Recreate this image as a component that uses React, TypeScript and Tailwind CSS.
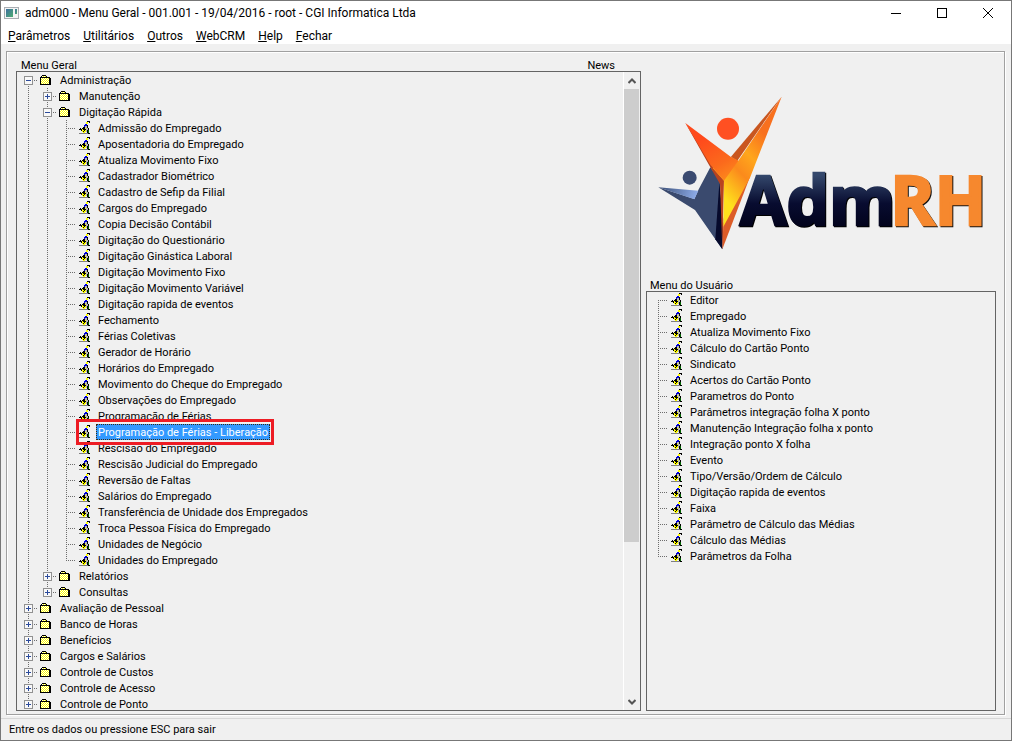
import clsx from "clsx";

const menus = ["Parâmetros", "Utilitários", "Outros", "WebCRM", "Help", "Fechar"];

type Row = {
  label: string;
  level: number;
  open?: boolean;
  last?: boolean;
};

const shortcuts = [
  "Admissão do Empregado",
  "Aposentadoria do Empregado",
  "Atualiza Movimento Fixo",
  "Cadastrador Biométrico",
  "Cadastro de Sefip da Filial",
  "Cargos do Empregado",
  "Copia Decisão Contábil",
  "Digitação do Questionário",
  "Digitação Ginástica Laboral",
  "Digitação Movimento Fixo",
  "Digitação Movimento Variável",
  "Digitação rapida de eventos",
  "Fechamento",
  "Férias Coletivas",
  "Gerador de Horário",
  "Horários do Empregado",
  "Movimento do Cheque do Empregado",
  "Observações do Empregado",
  "Programação de Férias",
  "Programação de Férias - Liberação",
  "Rescisão do Empregado",
  "Rescisão Judicial do Empregado",
  "Reversão de Faltas",
  "Salários do Empregado",
  "Transferência de Unidade dos Empregados",
  "Troca Pessoa Física do Empregado",
  "Unidades de Negócio",
  "Unidades do Empregado",
];

const selected = "Programação de Férias - Liberação";

const mainRows: Row[] = [
  { label: "Administração", level: 0, open: true },
  { label: "Manutenção", level: 1 },
  { label: "Digitação Rápida", level: 1, open: true },
  ...shortcuts.map((label, i) => ({
    label,
    level: 2,
    last: i === shortcuts.length - 1,
  })),
  { label: "Relatórios", level: 1 },
  { label: "Consultas", level: 1, last: true },
  { label: "Avaliação de Pessoal", level: 0 },
  { label: "Banco de Horas", level: 0 },
  { label: "Benefícios", level: 0 },
  { label: "Cargos e Salários", level: 0 },
  { label: "Controle de Custos", level: 0 },
  { label: "Controle de Acesso", level: 0 },
  { label: "Controle de Ponto", level: 0 },
];

const userRows = [
  "Editor",
  "Empregado",
  "Atualiza Movimento Fixo",
  "Cálculo do Cartão Ponto",
  "Sindicato",
  "Acertos do Cartão Ponto",
  "Parametros do Ponto",
  "Parâmetros integração folha X ponto",
  "Manutenção Integração folha x ponto",
  "Integração ponto X folha",
  "Evento",
  "Tipo/Versão/Ordem de Cálculo",
  "Digitação rapida de eventos",
  "Faixa",
  "Parâmetro de Cálculo das Médias",
  "Cálculo das Médias",
  "Parâmetros da Folha",
];

const palette: Record<string, string> = {
  K: "#000000",
  Y: "#ffff00",
  W: "#ffffff",
  B: "#0000d8",
  G: "#b8b8b8",
  D: "#808080",
  N: "#006000",
};

const folderBitmap = [
  "..KKKK.....",
  ".KWYWYK....",
  "KKKKKKKKKK.",
  "KWYWYWYWYKK",
  "KYWYWYWYWKK",
  "KWYWYWYWYKK",
  "KYWYWYWYWKK",
  "KWYWYWYWYKK",
  "KYWYWYWYWKK",
  "KKKKKKKKKKK",
];

const programBitmap = [
  "........KKK",
  ".......YY.K",
  ".......YY..",
  "......BB...",
  ".....BBBK..",
  ".....BGGK..",
  "....KKGGK..",
  ".K.KKKYGGK.",
  "KKKYKKKGGK.",
  "..KYYKYGKN.",
  "...YKYYGKN.",
  "....YY..KN.",
  "DDDDDDDDDKK",
];

// draws a small icon from rows of palette letters
const Bitmap = ({ rows }: { rows: string[] }) => (
  <svg
    width={rows[0].length}
    height={rows.length}
    shapeRendering="crispEdges"
    aria-hidden="true"
    className="shrink-0"
  >
    {rows.map((row, y) =>
      row
        .split("")
        .map((c, x) =>
          c === "." ? null : (
            <rect key={`${x}-${y}`} x={x} y={y} width={1} height={1} fill={palette[c]} />
          )
        )
    )}
  </svg>
);

type CellProps = {
  up?: boolean;
  down?: boolean;
  across?: boolean;
  box?: "plus" | "minus";
};

const Cell = ({ up, down, across, box }: CellProps) => (
  <svg
    width={19}
    height={16}
    shapeRendering="crispEdges"
    aria-hidden="true"
    className="shrink-0"
  >
    <g stroke="#6d6d6d" strokeDasharray="1 1">
      {up && <path d="M9.5 0V8" />}
      {down && <path d="M9.5 8V16" />}
      {across && <path d="M9 8.5H19" />}
    </g>
    {box && (
      <>
        <rect x={5.5} y={4.5} width={8} height={8} fill="#f8f8f8" stroke="#919191" />
        <path d="M7 8.5H12" stroke="#2b4a9b" />
        {box === "plus" && <path d="M9.5 6V11" stroke="#2b4a9b" />}
      </>
    )}
  </svg>
);

const Entry = ({ label, folder }: { label: string; folder?: boolean }) => {
  const active = label === selected;
  return (
    <div className={clsx("flex h-4", active && "relative")}>
      <span className={clsx("flex w-5 shrink-0 items-start", folder ? "pt-[3px] pl-[2px]" : "pt-px pl-[3px]")}>
        <Bitmap rows={folder ? folderBitmap : programBitmap} />
      </span>
      <button
        type="button"
        className={clsx(
          "h-4 whitespace-nowrap px-[2px] pt-[2px] text-left leading-[14px]",
          active &&
            "bg-[#3399ff] text-white outline-1 -outline-offset-1 outline-dotted outline-[#3a2a10]"
        )}
      >
        {label}
      </button>
      {active && (
        <span className="pointer-events-none absolute -inset-y-[5px] -right-1 left-0 z-10 border-3 border-[#ed1c24]" />
      )}
    </div>
  );
};

const MainTree = () => (
  <ul className="min-w-0 flex-1 overflow-hidden pl-[2px]">
    {mainRows.map((row, i) => {
      const folder = row.level < 2;
      const box = folder ? (row.open ? "minus" : "plus") : undefined;
      return (
        <li key={row.label} className="flex h-4">
          {row.level > 0 && <Cell up down />}
          {row.level > 1 && <Cell up down />}
          <Cell up={i > 0} down={!row.last} across box={box} />
          <Entry label={row.label} folder={folder} />
        </li>
      );
    })}
  </ul>
);

const UserTree = () => (
  <ul className="pl-[2px]">
    {userRows.map((label, i) => (
      <li key={label} className="flex h-4">
        <Cell up={i > 0} down={i < userRows.length - 1} across />
        <Entry label={label} />
      </li>
    ))}
  </ul>
);

const Scrollbar = () => (
  <div className="flex w-[17px] shrink-0 flex-col border-l border-white pr-px">
    <button type="button" aria-label="Subir" className="flex h-[17px] items-center justify-center">
      <svg width="8" height="6" fill="none" stroke="#555" strokeWidth="2">
        <path d="M0.5 5L4 1.5L7.5 5" />
      </svg>
    </button>
    <div className="flex-1">
      <div className="h-[75%] bg-[#cdcdcd]" />
    </div>
    <button type="button" aria-label="Descer" className="flex h-[17px] items-center justify-center">
      <svg width="8" height="6" fill="none" stroke="#555" strokeWidth="2">
        <path d="M0.5 1L4 4.5L7.5 1" />
      </svg>
    </button>
  </div>
);

const Logo = () => (
  <svg width="333" height="163" viewBox="45 36 999 489" role="img" aria-label="AdmRH">
    <defs>
      <linearGradient id="flame" x1="200" y1="170" x2="290" y2="330" gradientUnits="userSpaceOnUse">
        <stop offset="0" stopColor="#ff4a1c" />
        <stop offset="0.5" stopColor="#fb6a1c" />
        <stop offset="1" stopColor="#ffa01c" />
      </linearGradient>
      <linearGradient id="arm" x1="390" y1="180" x2="230" y2="330" gradientUnits="userSpaceOnUse">
        <stop offset="0" stopColor="#f8701e" />
        <stop offset="0.35" stopColor="#ffa61c" />
        <stop offset="0.6" stopColor="#fb8a1c" />
        <stop offset="1" stopColor="#ffe01c" />
      </linearGradient>
      <linearGradient id="navy" x1="0" y1="285" x2="0" y2="440" gradientUnits="userSpaceOnUse">
        <stop offset="0" stopColor="#34486c" />
        <stop offset="0.55" stopColor="#080c30" />
        <stop offset="1" stopColor="#02031c" />
      </linearGradient>
      <linearGradient id="wing" x1="60" y1="320" x2="165" y2="350" gradientUnits="userSpaceOnUse">
        <stop offset="0" stopColor="#3c5078" />
        <stop offset="1" stopColor="#8aa8e4" />
      </linearGradient>
    </defs>
    <circle cx="149" cy="293" r="21" fill="#3a4a70" />
    <path d="M55 322L165 390L247 508L240 300L211 262L175 330L163 357Z" fill="#3a4a6e" />
    <path d="M55 322L175 332L163 358Z" fill="url(#wing)" />
    <path d="M238 310L226 478L247 508L250 420Z" fill="#060a2c" />
    <circle cx="264" cy="146" r="33" fill="#ff5022" />
    <path d="M136 129L211 262L240 312L247 508L252 300Z" fill="#b8431f" />
    <path d="M425 50L273 230L290 245Z" fill="#c9561f" />
    <path d="M247 508L330 290L300 300L250 430Z" fill="#dc5c28" />
    <path d="M425 50L295 242L273 231L218 264L252 302L250 440L330 293Z" fill="url(#arm)" />
    <path d="M136 129L273 231L295 242L252 302L211 254Z" fill="url(#flame)" />
    <g fontFamily="'Open Sans', 'Noto Sans', sans-serif" fontWeight="700" fontSize="202" strokeWidth="8">
      <text x="303" y="439" fill="#000" stroke="#000">
        Adm
      </text>
      <text x="300" y="436" fill="url(#navy)" stroke="url(#navy)">
        Adm
      </text>
      <text x="754" y="439" fill="#111" stroke="#111">
        RH
      </text>
      <text x="751" y="436" fill="#f6882e" stroke="#f6882e">
        RH
      </text>
    </g>
  </svg>
);

const TitleBar = () => (
  <header className="flex h-6 items-center bg-white pl-[3px]">
    <svg width="15" height="12" shapeRendering="crispEdges" aria-hidden="true">
      <defs>
        <linearGradient id="screen" x1="0" y1="0" x2="1" y2="1">
          <stop offset="0" stopColor="#3c6ea0" />
          <stop offset="1" stopColor="#4fae72" />
        </linearGradient>
      </defs>
      <rect x="0.5" y="0.5" width="14" height="11" fill="#f4f4f4" stroke="#a9adb2" />
      <rect x="2" y="2" width="7" height="8" fill="url(#screen)" />
      <rect x="11" y="2" width="2" height="5" fill="url(#screen)" />
    </svg>
    <h1 className="ml-[6px] flex-1 text-[12px] leading-4">
      adm000 - Menu Geral - 001.001 - 19/04/2016 - root - CGI Informatica Ltda
    </h1>
    <button type="button" aria-label="Minimizar" className="flex w-[46px] justify-center">
      <svg width="10" height="10" shapeRendering="crispEdges" stroke="#000">
        <path d="M0 5.5H10" />
      </svg>
    </button>
    <button type="button" aria-label="Maximizar" className="flex w-[46px] justify-center">
      <svg width="10" height="10" shapeRendering="crispEdges" stroke="#000" fill="none">
        <rect x="0.5" y="0.5" width="9" height="9" />
      </svg>
    </button>
    <button type="button" aria-label="Fechar janela" className="flex w-[46px] justify-center">
      <svg width="10" height="10" stroke="#000">
        <path d="M0 0L10 10M10 0L0 10" />
      </svg>
    </button>
  </header>
);

const App = () => {
  return (
    <div className="flex h-screen flex-col border border-[#777] bg-[#f0f0f0] font-[Roboto,'Liberation_Sans',sans-serif] text-[11px] text-black">
      <TitleBar />
      <nav className="flex h-[19px] items-center gap-[13px] bg-white pt-[2px] pl-[7px] text-[12px] leading-4">
        {menus.map((item) => (
          <button key={item} type="button">
            <span className="underline">{item[0]}</span>
            {item.slice(1)}
          </button>
        ))}
      </nav>

      <main className="flex min-h-0 flex-1 flex-col pt-[7px] pr-[6px] pb-[3px] pl-[5px]">
        <div className="grid min-h-0 flex-1 grid-cols-[25fr_14fr] gap-[5px] border border-[#a0a0a0] pr-2 pb-[3px] pl-[9px] shadow-[inset_1px_1px_#fff,1px_1px_#fff]">
          <section className="flex min-h-0 min-w-0 flex-col">
            <div className="flex h-[19px] shrink-0 items-end justify-between pr-[26px] pl-[5px] leading-[10px]">
              <h2>Menu Geral</h2>
              <h2>News</h2>
            </div>
            <div className="flex min-h-0 flex-1 overflow-hidden border border-[#646464]">
              <MainTree />
              <Scrollbar />
            </div>
          </section>

          <section className="flex min-h-0 min-w-0 flex-col">
            <div className="h-[229px] shrink-0 pt-10 pl-[9px]">
              <Logo />
            </div>
            <h2 className="pl-1 leading-[10px]">Menu do Usuário</h2>
            <div className="min-h-0 flex-1 overflow-hidden border border-[#646464]">
              <UserTree />
            </div>
          </section>
        </div>
      </main>

      <footer className="flex h-[22px] items-center border-t border-[#d7d7d7] pt-[2px] pl-2">
        Entre os dados ou pressione ESC para sair
      </footer>
    </div>
  );
};

export default App;
